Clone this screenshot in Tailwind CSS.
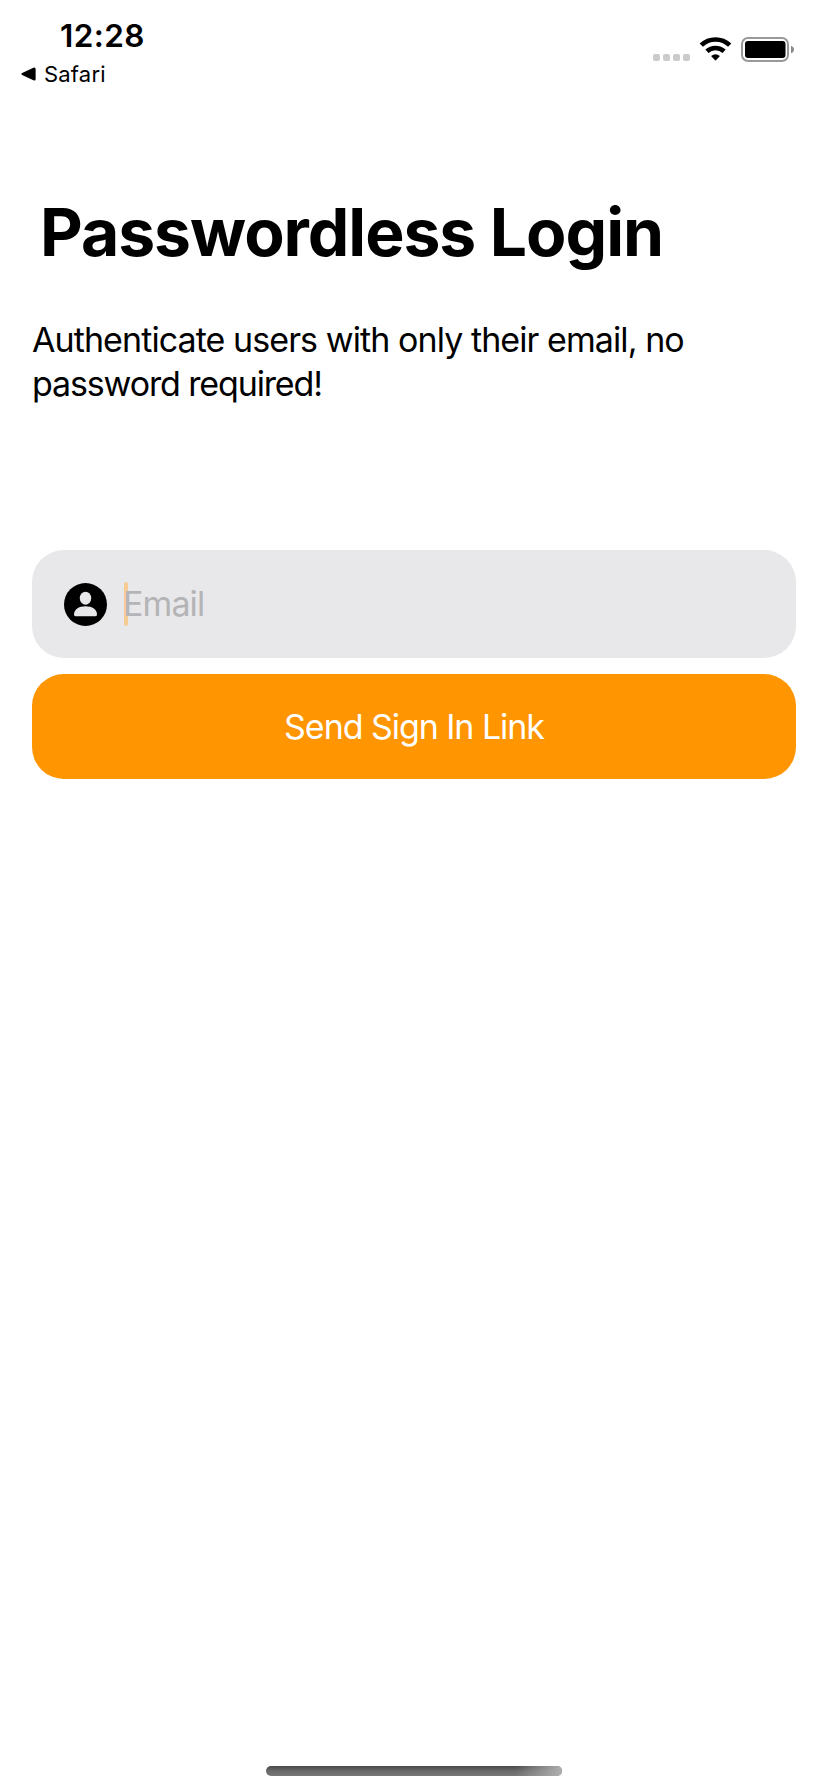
<!DOCTYPE html>
<html lang="en">
<head>
<meta charset="utf-8">
<title>Passwordless Login</title>
<script src="https://cdn.jsdelivr.net/npm/@tailwindcss/browser@4"></script>
</head>
<body class="bg-white">
<div class="flex h-[1792px] w-[828px] flex-col overflow-hidden bg-white font-['Inter',sans-serif] text-black">
  <header class="flex h-[100px] shrink-0 justify-between">
    <div class="flex flex-col pl-[21px] pt-[16px]">
      <div class="pl-[39px] text-[31.5px] font-semibold leading-[40px] tracking-[0.4px]">12:28</div>
      <div class="flex items-center gap-[8px] text-[22px] leading-[36px] tracking-[0.2px]">
        <svg class="h-[14px] w-[15px]" viewBox="0 0 15 14"><path d="M1.2 6.1 12.4.7Q14.6-.2 14.6 2v10q0 2.200-2.200 1.300L1.200 7.900Q-.5 7 1.200 6.100Z"/></svg>
        <span>Safari</span>
      </div>
    </div>
    <div class="flex items-start pr-[34px] pt-[37px]">
      <div class="mt-[17px] flex gap-[3px]">
        <i class="size-[7px] rounded-[2px] bg-[#cbcbcb]"></i><i class="size-[7px] rounded-[2px] bg-[#cbcbcb]"></i><i class="size-[7px] rounded-[2px] bg-[#cbcbcb]"></i><i class="size-[7px] rounded-[2px] bg-[#cbcbcb]"></i>
      </div>
      <svg class="ml-[9px] h-[24px] w-[33px]" viewBox="0 0 33 24"><g fill="none" stroke="#000" stroke-width="4.600"><path d="M2.300 8.200C10.100.5 22.900.5 30.700 8.200"/><path d="M7.900 14.300C12.700 9.800 20.300 9.800 25.100 14.300"/></g><path d="M12.100 19.100Q16.500 15.300 20.900 19.100L17.200 23.100Q16.500 23.800 15.800 23.100Z"/></svg>
      <svg class="ml-[9px] h-[25px] w-[53px]" viewBox="0 0 53 25"><rect x="1" y="1" width="46" height="23" rx="6" fill="none" stroke="#999" stroke-width="2"/><rect x="4" y="4" width="40.500" height="17" rx="3"/><path d="M50 8.700Q53 9.800 53 12.500T50 16.300Z" fill="#8c8c8c"/></svg>
    </div>
  </header>

  <main class="flex grow flex-col px-[32px] pt-[92px]">
    <h1 class="pl-[8px] text-[66px] font-bold leading-[80px] tracking-[-1.05px]">Passwordless Login</h1>
    <p class="mt-[46px] text-[34px] leading-[44px] tracking-[-0.92px]">Authenticate users with only their email, no<br><span class="tracking-[-1.13px]">password required!</span></p>
    <div class="mt-[144px] flex h-[108px] items-center rounded-[32px] bg-[#e8e8ea] pl-[32px]">
      <svg class="size-[43px]" viewBox="0 0 43 43"><circle cx="21.500" cy="21.500" r="21.500"/><ellipse cx="21.500" cy="15.200" rx="5.700" ry="6.500" fill="#e8e8ea"/><path d="M10 31.500C10 26.500 14.600 23.200 21.500 23.200S33 26.500 33 31.500Q33 33.200 31.500 33.200H11.500Q10 33.200 10 31.500Z" fill="#e8e8ea"/></svg>
      <div class="relative ml-[17px] text-[34px] leading-[44px] tracking-[-0.9px] text-[#b4b4b6]">
        <span class="absolute left-0 top-0 h-[44px] w-[4px] rounded-full bg-[#f5cb93]"></span>
        <span class="relative -ml-px">Email</span>
      </div>
    </div>
    <button class="mt-[16px] h-[105px] rounded-[32px] bg-[#ff9500] text-[34px] leading-[44px] tracking-[-1.05px] text-white">Send Sign In Link</button>
  </main>

  <footer class="flex justify-center pb-[16px]">
    <div class="h-[10px] w-[296px] overflow-hidden rounded-full bg-linear-to-b from-[#4a4a4a] via-[#6a6a6a] to-[#777777]">
      <div class="ml-auto h-full w-[46px] bg-linear-to-r from-[#aaaaaa]/0 to-[#b0b0b0]"></div>
    </div>
  </footer>
</div>
</body>
</html>
